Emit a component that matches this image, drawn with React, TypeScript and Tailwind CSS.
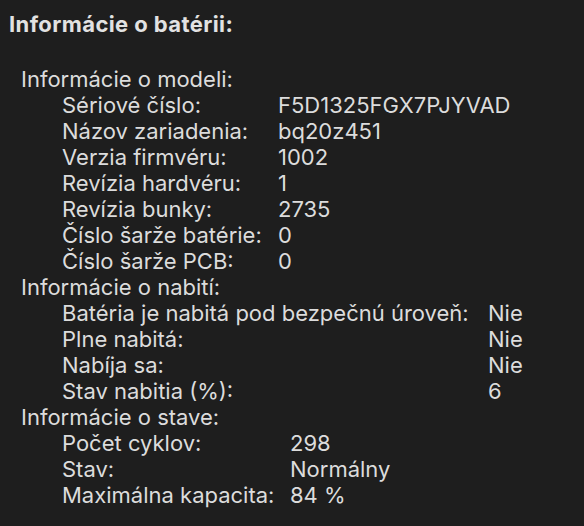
type Row = [string, string];

type Section = {
  title: string;
  cols: string;
  rows: Row[];
};

const sections: Section[] = [
  {
    title: "Informácie o modeli:",
    cols: "grid-cols-[216px_1fr]",
    rows: [
      ["Sériové číslo:", "F5D1325FGX7PJYVAD"],
      ["Názov zariadenia:", "bq20z451"],
      ["Verzia firmvéru:", "1002"],
      ["Revízia hardvéru:", "1"],
      ["Revízia bunky:", "2735"],
      ["Číslo šarže batérie:", "0"],
      ["Číslo šarže PCB:", "0"],
    ],
  },
  {
    title: "Informácie o nabití:",
    cols: "grid-cols-[426px_1fr]",
    rows: [
      ["Batéria je nabitá pod bezpečnú úroveň:", "Nie"],
      ["Plne nabitá:", "Nie"],
      ["Nabíja sa:", "Nie"],
      ["Stav nabitia (%):", "6"],
    ],
  },
  {
    title: "Informácie o stave:",
    cols: "grid-cols-[228px_1fr]",
    rows: [
      ["Počet cyklov:", "298"],
      ["Stav:", "Normálny"],
      ["Maximálna kapacita:", "84 %"],
    ],
  },
];

function InfoSection({ section }: { section: Section }) {
  return (
    <section>
      <div className="pl-[21px]">{section.title}</div>
      <div className={`grid ${section.cols} pl-[62px]`}>
        {section.rows.map(([label, value]) => (
          <div key={label} className="contents">
            <div className="whitespace-nowrap">{label}</div>
            <div className="whitespace-nowrap">{value}</div>
          </div>
        ))}
      </div>
    </section>
  );
}

export default function App() {
  return (
    <div className="h-[526px] w-[584px] overflow-hidden bg-[#1e1e1e] pt-[11px] font-['Inter',sans-serif] text-[22px] leading-[26px] text-[#dcdcdc]">
      <h1 className="pl-[9px] font-bold tracking-[0.4px] text-[#e2e2e2]">Informácie o batérii:</h1>
      <div className="mt-[29px]">
        {sections.map((section) => (
          <InfoSection key={section.title} section={section} />
        ))}
      </div>
    </div>
  );
}
